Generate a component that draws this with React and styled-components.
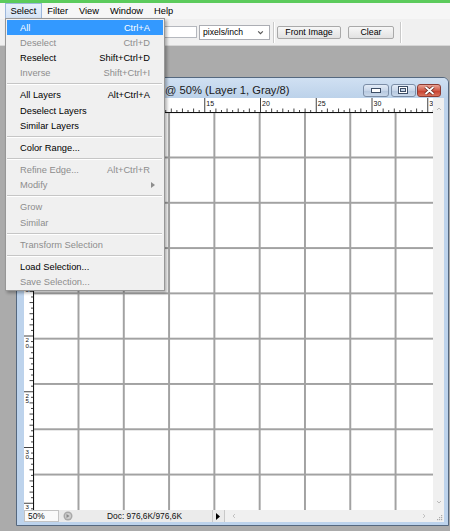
import React from 'react'
import styled, { createGlobalStyle } from 'styled-components'

const GlobalStyle = createGlobalStyle`
  html, body { margin: 0; padding: 0; }
  body {
    font-family: "Liberation Sans", Arial, sans-serif;
    background: #ababab;
  }
`

const Screen = styled.div`
  width: 450px;
  height: 531px;
  display: flex;
  flex-direction: column;
  overflow: hidden;
  position: relative;
`

const TopStrip = styled.div`
  height: 3px;
  flex: none;
  background: #5ccb5c;
`

const MenuBar = styled.div`
  height: 16px;
  flex: none;
  display: flex;
  align-items: stretch;
  padding-left: 5px;
  background: #f6f6f6;
  font-size: 9.3px;
  color: #000;
  position: relative;
  z-index: 5;
`

const MenuTitle = styled.div`
  position: relative;
  display: flex;
  align-items: center;
  padding: 0 4.5px;
  border: 1px solid ${p => (p.$open ? '#9db8dc' : 'transparent')};
  background: ${p => (p.$open ? 'linear-gradient(#e9f1fb, #d4e3f5)' : 'transparent')};
`

const Dropdown = styled.div`
  position: absolute;
  top: 100%;
  left: -1px;
  width: 160px;
  box-sizing: border-box;
  padding-top: 1px;
  background: #f0f0f0;
  border: 1px solid #979797;
  box-shadow: 2px 2px 3px rgba(0, 0, 0, 0.3);
`

const Item = styled.div`
  height: 15.2px;
  display: flex;
  align-items: center;
  justify-content: space-between;
  margin: 0 1px;
  padding: 0 13px;
  white-space: nowrap;
  color: ${p => (p.$active ? '#fff' : p.$disabled ? '#8d8d8d' : '#000')};
  background: ${p => (p.$active ? '#3399ff' : 'transparent')};
`

const Shortcut = styled.span`
  display: flex;
  align-items: center;
`

const Separator = styled.div`
  height: 7px;
  margin: 0 2px 0 1px;
  display: flex;
  align-items: center;
  &::after {
    content: '';
    flex: 1;
    height: 0;
    border-top: 1px solid #c6c6c6;
    border-bottom: 1px solid #fff;
  }
`

const OptionsBar = styled.div`
  height: 27px;
  flex: none;
  box-sizing: border-box;
  display: flex;
  align-items: center;
  padding-left: 150px;
  background: #f0f0f0;
  border-bottom: 1px solid #d6d6d6;
  font-size: 9.3px;
`

const TextField = styled.div`
  width: 47px;
  height: 12px;
  box-sizing: border-box;
  background: #fff;
  border: 1px solid #b5b8be;
`

const SelectBox = styled.div`
  margin-left: 2px;
  width: 71px;
  height: 15px;
  box-sizing: border-box;
  display: flex;
  align-items: center;
  justify-content: space-between;
  padding: 0 5px 0 3px;
  background: #fff;
  border: 1px solid #abadb3;
  font-size: 8.6px;
`

const BarDivider = styled.div`
  width: 1px;
  height: 21px;
  margin: 0 ${p => p.$gap || 3}px;
  background: #c9c9c9;
  box-shadow: 1px 0 0 #fff;
`

const Button = styled.div`
  width: ${p => p.$w}px;
  height: 13px;
  margin-left: ${p => p.$ml || 0}px;
  box-sizing: border-box;
  display: flex;
  align-items: center;
  justify-content: center;
  border: 1px solid #a9a9a9;
  border-radius: 2px;
  background: linear-gradient(#f7f7f7, #e2e2e2);
  font-size: 8.8px;
`

const Workspace = styled.div`
  flex: 1;
  min-height: 0;
  display: flex;
  padding: 31px 1px 5px 16px;
  background: #ababab;
`

const DocWindow = styled.div`
  flex: 1;
  display: flex;
  flex-direction: column;
  border: 1px solid #55687f;
  border-radius: 6px 6px 0 0;
  background: #bdd3ec;
  overflow: hidden;
`

const TitleBar = styled.div`
  height: 20px;
  flex: none;
  box-sizing: border-box;
  display: flex;
  align-items: center;
  padding: 4px 7px 0 97px;
  background: linear-gradient(#d0e0f2, #bcd2ea);
  font-size: 11.2px;
  color: #1a1a1a;
  white-space: nowrap;
`

const WinButtons = styled.div`
  margin-left: auto;
  display: flex;
  gap: 1.5px;
`

const WinButton = styled.div`
  width: ${p => p.$w}px;
  height: 13px;
  box-sizing: border-box;
  display: flex;
  align-items: center;
  justify-content: center;
  border: 1px solid ${p => (p.$close ? '#8c3b33' : '#7b8da6')};
  border-radius: 3px;
  background: ${p =>
    p.$close
      ? 'linear-gradient(#e9a597, #d05a49 50%, #c7402f 55%, #d9735d)'
      : 'linear-gradient(#e3ecf7, #c8d6e9 50%, #b6c8df 55%, #c9d8ea)'};
`

const Body = styled.div`
  flex: 1;
  min-height: 0;
  display: grid;
  grid-template-columns: 10px 1fr 11px;
  grid-template-rows: 15px 1fr 12px;
  padding: 0 4px 3px 7px;
`

const Corner = styled.div`
  background: #fff;
  border-right: 1px solid #222;
  border-bottom: 1px solid #222;
  box-sizing: border-box;
`

const RulerBox = styled.div`
  background: #fff;
  overflow: hidden;
  svg { display: block; }
`

const VScroll = styled.div`
  grid-row: 1 / 3;
  grid-column: 3;
  display: flex;
  flex-direction: column;
  justify-content: space-between;
  align-items: center;
  padding: 8px 0 5px;
  background: #f0f0f0;
`

const Canvas = styled.div`
  background-color: #fff;
  background-image: linear-gradient(to right, #a2a2a2 1.5px, transparent 1.5px),
    linear-gradient(to bottom, #a2a2a2 1.5px, transparent 1.5px);
  background-size: 45.3px 45.3px;
  background-position: 43.5px 43.5px;
`

const StatusRow = styled.div`
  grid-column: 1 / 3;
  display: flex;
  align-items: stretch;
  background: #ebebeb;
  font-size: 8.4px;
  color: #111;
`

const ZoomField = styled.div`
  width: 35px;
  box-sizing: border-box;
  display: flex;
  align-items: center;
  padding-left: 3px;
  background: #fafafa;
  border: 1px solid #c3c3c3;
`

const StatusCell = styled.div`
  width: ${p => (p.$w ? `${p.$w}px` : 'auto')};
  flex: ${p => (p.$w ? 'none' : 1)};
  display: flex;
  align-items: center;
  justify-content: ${p => p.$justify || 'center'};
  padding: ${p => p.$pad || '0'};
  border-right: ${p => (p.$divider ? '1px solid #c8c8c8' : 'none')};
  box-sizing: border-box;
  background: ${p => p.$bg || 'transparent'};
`

const Grip = styled.div`
  background: #f0f0f0;
  display: flex;
  align-items: flex-end;
  justify-content: flex-end;
  padding: 0 1px 1px 0;
`

const menuItems = [
  { label: 'All', key: 'Ctrl+A', active: true },
  { label: 'Deselect', key: 'Ctrl+D', disabled: true },
  { label: 'Reselect', key: 'Shift+Ctrl+D' },
  { label: 'Inverse', key: 'Shift+Ctrl+I', disabled: true },
  'sep',
  { label: 'All Layers', key: 'Alt+Ctrl+A' },
  { label: 'Deselect Layers' },
  { label: 'Similar Layers' },
  'sep',
  { label: 'Color Range...' },
  'sep',
  { label: 'Refine Edge...', key: 'Alt+Ctrl+R', disabled: true },
  { label: 'Modify', sub: true, disabled: true },
  'sep',
  { label: 'Grow', disabled: true },
  { label: 'Similar', disabled: true },
  'sep',
  { label: 'Transform Selection', disabled: true },
  'sep',
  { label: 'Load Selection...' },
  { label: 'Save Selection...', disabled: true }
]

const UNIT = 11.15

function TopRuler () {
  const ticks = []
  for (let i = 0; i <= 72; i++) {
    const x = 3.5 + (i * UNIT) / 2
    if (i % 10 === 0) {
      ticks.push(<line key={i} x1={x} y1={0} x2={x} y2={15} stroke='#111' strokeWidth='0.8' />)
      ticks.push(
        <text key={`t${i}`} x={x + 1.5} y={7.5} fontSize='7' fontFamily='Liberation Sans, Arial, sans-serif' fill='#111'>
          {i / 2}
        </text>
      )
    } else {
      const h = i % 2 === 0 ? 4 : 2.5
      ticks.push(<line key={i} x1={x} y1={14.5 - h} x2={x} y2={15} stroke='#111' strokeWidth='0.8' />)
    }
  }
  return (
    <svg width='399' height='15'>
      {ticks}
      <line x1='0' y1='14.5' x2='399' y2='14.5' stroke='#111' strokeWidth='1' />
    </svg>
  )
}

function LeftRuler () {
  const ticks = []
  for (let i = 0; i <= 72; i++) {
    const y = (i * UNIT) / 2
    if (i % 10 === 0) {
      const digits = String(i / 2).split('')
      ticks.push(<line key={i} x1={0} y1={y} x2={10} y2={y} stroke='#111' strokeWidth='0.8' />)
      digits.forEach((d, j) => {
        ticks.push(
          <text key={`t${i}-${j}`} x={1.5} y={y + 6 + j * 5.5} fontSize='6.2' fontFamily='Liberation Sans, Arial, sans-serif' fill='#111'>
            {d}
          </text>
        )
      })
    } else {
      const w = i % 2 === 0 ? 4 : 2.5
      ticks.push(<line key={i} x1={9.5 - w} y1={y} x2={10} y2={y} stroke='#111' strokeWidth='0.8' />)
    }
  }
  return (
    <svg width='10' height='397'>
      {ticks}
      <line x1='9.5' y1='0' x2='9.5' y2='397' stroke='#111' strokeWidth='1' />
    </svg>
  )
}

function Chevron ({ dir, color = '#b9b9b9', size = 6 }) {
  const pts = {
    up: '1,4 3,2 5,4',
    down: '1,2 3,4 5,2',
    left: '4,1 2,3 4,5',
    right: '2,1 4,3 2,5'
  }[dir]
  return (
    <svg width={size} height={size} viewBox='0 0 6 6'>
      <polyline points={pts} fill='none' stroke={color} strokeWidth='1' />
    </svg>
  )
}

function SelectMenu () {
  return (
    <Dropdown>
      {menuItems.map((it, i) =>
        it === 'sep'
          ? <Separator key={i} />
          : (
            <Item key={i} $active={it.active} $disabled={it.disabled}>
              <span>{it.label}</span>
              {it.key && <Shortcut>{it.key}</Shortcut>}
              {it.sub && (
                <Shortcut style={{ marginRight: -5 }}>
                  <svg width='4' height='6' viewBox='0 0 4 6'>
                    <polygon points='0,0 4,3 0,6' fill='#8d8d8d' />
                  </svg>
                </Shortcut>
              )}
            </Item>
            )
      )}
    </Dropdown>
  )
}

export default function App () {
  return (
    <Screen>
      <GlobalStyle />
      <TopStrip />
      <MenuBar>
        <MenuTitle $open>
          Select
          <SelectMenu />
        </MenuTitle>
        <MenuTitle>Filter</MenuTitle>
        <MenuTitle>View</MenuTitle>
        <MenuTitle>Window</MenuTitle>
        <MenuTitle>Help</MenuTitle>
      </MenuBar>

      <OptionsBar>
        <TextField />
        <SelectBox>
          <span>pixels/inch</span>
          <Chevron dir='down' color='#555' size={7} />
        </SelectBox>
        <BarDivider />
        <Button $w={64}>Front Image</Button>
        <Button $w={46} $ml={7}>Clear</Button>
        <BarDivider $gap={6} />
      </OptionsBar>

      <Workspace>
        <DocWindow>
          <TitleBar>
            <span>Untitled-1 @ 50% (Layer 1, Gray/8)</span>
            <WinButtons>
              <WinButton $w={26}>
                <svg width='10' height='5' viewBox='0 0 10 5'>
                  <rect x='0.5' y='0.5' width='9' height='4' fill='#fff' stroke='#3d4e66' />
                </svg>
              </WinButton>
              <WinButton $w={25}>
                <svg width='10' height='8' viewBox='0 0 10 8'>
                  <rect x='0.5' y='0.5' width='9' height='7' fill='#fff' stroke='#3d4e66' />
                  <rect x='2.5' y='2.5' width='5' height='3' fill='#c8d6e9' stroke='#3d4e66' />
                </svg>
              </WinButton>
              <WinButton $w={24} $close>
                <svg width='11' height='9' viewBox='0 0 11 9'>
                  <path d='M1.5 1 L9.5 8 M9.5 1 L1.5 8' stroke='#5a1e18' strokeWidth='3.2' />
                  <path d='M1.5 1 L9.5 8 M9.5 1 L1.5 8' stroke='#fff' strokeWidth='1.8' />
                </svg>
              </WinButton>
            </WinButtons>
          </TitleBar>

          <Body>
            <Corner />
            <RulerBox><TopRuler /></RulerBox>
            <VScroll>
              <Chevron dir='up' />
              <Chevron dir='down' />
            </VScroll>
            <RulerBox><LeftRuler /></RulerBox>
            <Canvas />
            <StatusRow>
              <ZoomField>50%</ZoomField>
              <StatusCell $w={18}>
                <svg width='10' height='10' viewBox='0 0 10 10'>
                  <circle cx='5' cy='5' r='4.5' fill='#a9a9a9' />
                  <circle cx='5' cy='5' r='3' fill='#cfcfcf' />
                  <path d='M3.5 3 L6.5 5 L3.5 7 Z' fill='#8a8a8a' />
                </svg>
              </StatusCell>
              <StatusCell $w={136} $divider>Doc: 976,6K/976,6K</StatusCell>
              <StatusCell $w={12} $divider $justify='flex-start' $pad='0 0 0 3px'>
                <svg width='4' height='7' viewBox='0 0 4 7'>
                  <polygon points='0,0 4,3.5 0,7' fill='#000' />
                </svg>
              </StatusCell>
              <StatusCell $bg='#f0f0f0' $justify='space-between' $pad='0 6px'>
                <Chevron dir='left' color='#c2c2c2' />
                <Chevron dir='right' color='#c2c2c2' />
              </StatusCell>
            </StatusRow>
            <Grip>
              <svg width='7' height='7' viewBox='0 0 7 7'>
                <rect x='5' y='1' width='1.2' height='1.2' fill='#aaa' />
                <rect x='3' y='3' width='1.2' height='1.2' fill='#aaa' />
                <rect x='5' y='3' width='1.2' height='1.2' fill='#aaa' />
                <rect x='1' y='5' width='1.2' height='1.2' fill='#aaa' />
                <rect x='3' y='5' width='1.2' height='1.2' fill='#aaa' />
                <rect x='5' y='5' width='1.2' height='1.2' fill='#aaa' />
              </svg>
            </Grip>
          </Body>
        </DocWindow>
      </Workspace>
    </Screen>
  )
}
